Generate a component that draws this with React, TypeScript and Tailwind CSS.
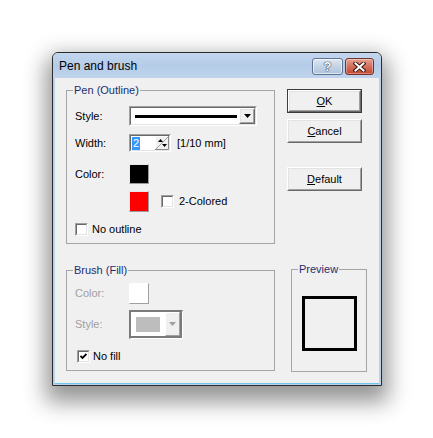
import type { ReactNode } from "react";

const sunken =
  "border border-t-[#a0a0a0] border-l-[#a0a0a0] border-r-white border-b-white";
const sunkenInner =
  "border border-t-[#696969] border-l-[#696969] border-r-[#e3e3e3] border-b-[#e3e3e3]";
const raised =
  "border border-t-white border-l-white border-r-[#696969] border-b-[#696969]";
const raisedInner =
  "border border-t-[#e3e3e3] border-l-[#e3e3e3] border-r-[#a0a0a0] border-b-[#a0a0a0]";

function Button({ mn, rest, isDefault }: { mn: string; rest: string; isDefault?: boolean }) {
  return (
    <div className={`h-[24px] w-[75px] ${isDefault ? "border border-[#3c3c3c]" : ""}`}>
      <div className={`h-full ${raised}`}>
        <div
          className={`flex h-full items-center justify-center bg-[#f0f0f0] text-[11px] leading-[13px] text-black ${raisedInner}`}
        >
          <span>
            <u className="underline-offset-[1px]">{mn}</u>
            {rest}
          </span>
        </div>
      </div>
    </div>
  );
}

function Check({ checked }: { checked?: boolean }) {
  return (
    <span className={`flex h-[13px] w-[13px] shrink-0 ${sunken}`}>
      <span className={`flex h-full w-full items-center justify-center bg-white ${sunkenInner}`}>
        {checked && (
          <svg width="7" height="7" viewBox="0 0 7 7">
            <path d="M0.5 3 L2.5 5 L6.5 1" fill="none" stroke="#000" strokeWidth="1.8" />
          </svg>
        )}
      </span>
    </span>
  );
}

function Group({
  title,
  className,
  children,
}: {
  title: string;
  className?: string;
  children: ReactNode;
}) {
  return (
    <fieldset className={`border border-[#a5a5a5] pl-[6px] ${className ?? ""}`}>
      <legend className="px-[1px] text-[11px] leading-[13px] text-[#1c2e6e]">{title}</legend>
      {children}
    </fieldset>
  );
}

function Swatch({ color }: { color: string }) {
  return (
    <div
      className={`h-[20px] w-[20px] border border-t-[#e8e8e8] border-l-[#e8e8e8] border-r-[#9a9a9a] border-b-[#9a9a9a] ${color}`}
    />
  );
}

export default function App() {
  return (
    <div className="h-[438px] w-[433px] bg-white pl-[52px] pt-[52px] font-['Liberation_Sans',Arial,sans-serif]">
      <div className="flex h-[334px] w-[330px] flex-col rounded-t-[6px] border border-[#2b2b2b] bg-[#b9d1ea] shadow-[0_10px_22px_6px_rgba(0,0,0,0.42)]">
        {/* title bar */}
        <div className="flex h-[25px] items-start justify-between rounded-t-[5px] bg-gradient-to-b from-[#c3d7ee] via-[#b5cce8] to-[#bfd4ec] pl-[6px] pr-[7px]">
          <span className="mt-[6px] text-[12px] leading-[14px] text-black">Pen and brush</span>
          <div className="mt-[5px] flex gap-[2px]">
            <div className="flex h-[17px] w-[31px] items-center justify-center rounded-[3px] border border-[#5f7392] bg-gradient-to-b from-[#dfe8f3] via-[#c3d3e6] to-[#aec3dc] shadow-[inset_0_0_0_1px_rgba(255,255,255,0.6)]">
              <span className="text-[13px] font-bold leading-[13px] text-white [text-shadow:0_0_1px_#2a3a55,0_0_1px_#2a3a55,0_0_1px_#2a3a55]">
                ?
              </span>
            </div>
            <div className="flex h-[17px] w-[29px] items-center justify-center rounded-[3px] border border-[#74322a] bg-gradient-to-b from-[#e6a292] via-[#d0705d] to-[#c4452f] shadow-[inset_0_0_0_1px_rgba(255,255,255,0.35)]">
              <svg width="13" height="10" viewBox="0 0 13 10">
                <path d="M2.5 1.5 L10.5 8.5 M10.5 1.5 L2.5 8.5" stroke="#3b1610" strokeWidth="4" strokeLinecap="square" />
                <path d="M2.5 1.5 L10.5 8.5 M10.5 1.5 L2.5 8.5" stroke="#fff" strokeWidth="2" strokeLinecap="square" />
              </svg>
            </div>
          </div>
        </div>

        {/* client */}
        <div className="mx-[2px] mb-[1px] flex flex-1 border-b border-[#6cc4ea] bg-[#f0f0f0] text-[11px] leading-[13px] text-black">
          <div className="ml-[11px] flex w-[209px] flex-col pt-[6px]">
            <Group title="Pen (Outline)">
              <div className="flex flex-col pb-[7px] pl-[2px] pt-[9px]">
                <div className="flex h-[20px] items-center">
                  <span className="w-[54px]">Style:</span>
                  <div className={`flex h-[20px] w-[128px] ${sunken}`}>
                    <div className={`flex flex-1 ${sunkenInner}`}>
                      <div className="flex flex-1 items-center bg-white pl-[4px] pr-[2px]">
                        <div className="h-[3px] w-full bg-black" />
                      </div>
                      <div className={`w-[16px] ${raised}`}>
                        <div className={`flex h-full items-center justify-center bg-[#f0f0f0] ${raisedInner}`}>
                          <svg width="7" height="4" viewBox="0 0 7 4">
                            <path d="M0 0 H7 L3.5 4 Z" fill="#000" />
                          </svg>
                        </div>
                      </div>
                    </div>
                  </div>
                </div>

                <div className="mt-[8px] flex h-[18px] items-center">
                  <span className="w-[54px]">Width:</span>
                  <div className={`flex h-[18px] w-[42px] ${sunken}`}>
                    <div className={`flex flex-1 ${sunkenInner}`}>
                      <div className="flex flex-1 items-center bg-white pl-[1px]">
                        <span className="bg-[#3399ff] px-[1px] text-white">2</span>
                      </div>
                      <svg width="14" height="14" viewBox="0 0 14 14" className="shrink-0">
                        <rect width="14" height="14" fill="#f0f0f0" />
                        <path d="M0.5 14 V0.5 H14" stroke="#fff" fill="none" />
                        <path d="M0 13.5 H13.5 V0" stroke="#8a8a8a" fill="none" />
                        <path d="M1 13 L13 1" stroke="#a0a0a0" />
                        <path d="M3 6 L5.5 3 L8 6 Z" fill="#000" />
                        <path d="M7 8 L9.5 11 L12 8 Z" fill="#000" />
                      </svg>
                    </div>
                  </div>
                  <span className="ml-[6px]">[1/10 mm]</span>
                </div>

                <div className="mt-[12px] flex h-[20px] items-center">
                  <span className="w-[54px]">Color:</span>
                  <Swatch color="bg-black" />
                </div>

                <div className="mt-[7px] flex h-[21px] items-center">
                  <span className="w-[54px]" />
                  <div className="h-[21px]">
                    <div className="h-[21px] w-[20px] border border-t-[#e8e8e8] border-l-[#e8e8e8] border-r-[#9a9a9a] border-b-[#9a9a9a] bg-[#ff0000]" />
                  </div>
                  <span className="ml-[12px]">
                    <Check />
                  </span>
                  <span className="ml-[5px]">2-Colored</span>
                </div>

                <div className="mt-[11px] flex h-[13px] items-center gap-[4px]">
                  <Check />
                  <span>No outline</span>
                </div>
              </div>
            </Group>

            <Group title="Brush (Fill)" className="mt-[20px]">
              <div className="flex flex-col pb-[7px] pl-[2px] pt-[6px]">
                <div className="flex h-[21px] items-center">
                  <span className="w-[54px] text-[#a0a0a0]">Color:</span>
                  <div className="h-[21px] w-[20px] border border-t-white border-l-white border-r-[#a0a0a0] border-b-[#a0a0a0] bg-white" />
                </div>

                <div className="mt-[6px] flex h-[29px] items-center">
                  <span className="w-[54px] text-[#a0a0a0]">Style:</span>
                  <div className="flex h-[29px] w-[54px] border-l-2 border-t-2 border-r border-b border-l-[#7a7a7a] border-t-[#7a7a7a] border-r-white border-b-white">
                    <div className="flex flex-1 items-center border-b-2 border-[#7a7a7a] bg-white pl-[5px]">
                      <div className="h-[15px] w-[24px] bg-[#bdbdbd]" />
                    </div>
                    <div className="w-[17px] border-b-2 border-r-2 border-[#7a7a7a]">
                      <div className={`flex h-full items-center justify-center bg-[#f0f0f0] ${raisedInner} border-t-white border-l-white`}>
                        <svg width="7" height="4" viewBox="0 0 7 4">
                          <path d="M0 0 H7 L3.5 4 Z" fill="#a0a0a0" />
                        </svg>
                      </div>
                    </div>
                  </div>
                </div>

                <div className="mt-[11px] flex h-[13px] items-center gap-[3px] pl-[2px]">
                  <Check checked />
                  <span>No fill</span>
                </div>
              </div>
            </Group>
          </div>

          <div className="ml-[12px] flex flex-col pt-[11px]">
            <Button mn="O" rest="K" isDefault />
            <div className="mt-[6px]">
              <Button mn="C" rest="ancel" />
            </div>
            <div className="mt-[24px]">
              <Button mn="D" rest="efault" />
            </div>
            <Group title="Preview" className="ml-[4px] mt-[72px] h-[109px] w-[76px]">
              <div className="ml-[4px] mt-[20px] h-[55px] w-[55px] border-[3px] border-black" />
            </Group>
          </div>
        </div>
      </div>
    </div>
  );
}
